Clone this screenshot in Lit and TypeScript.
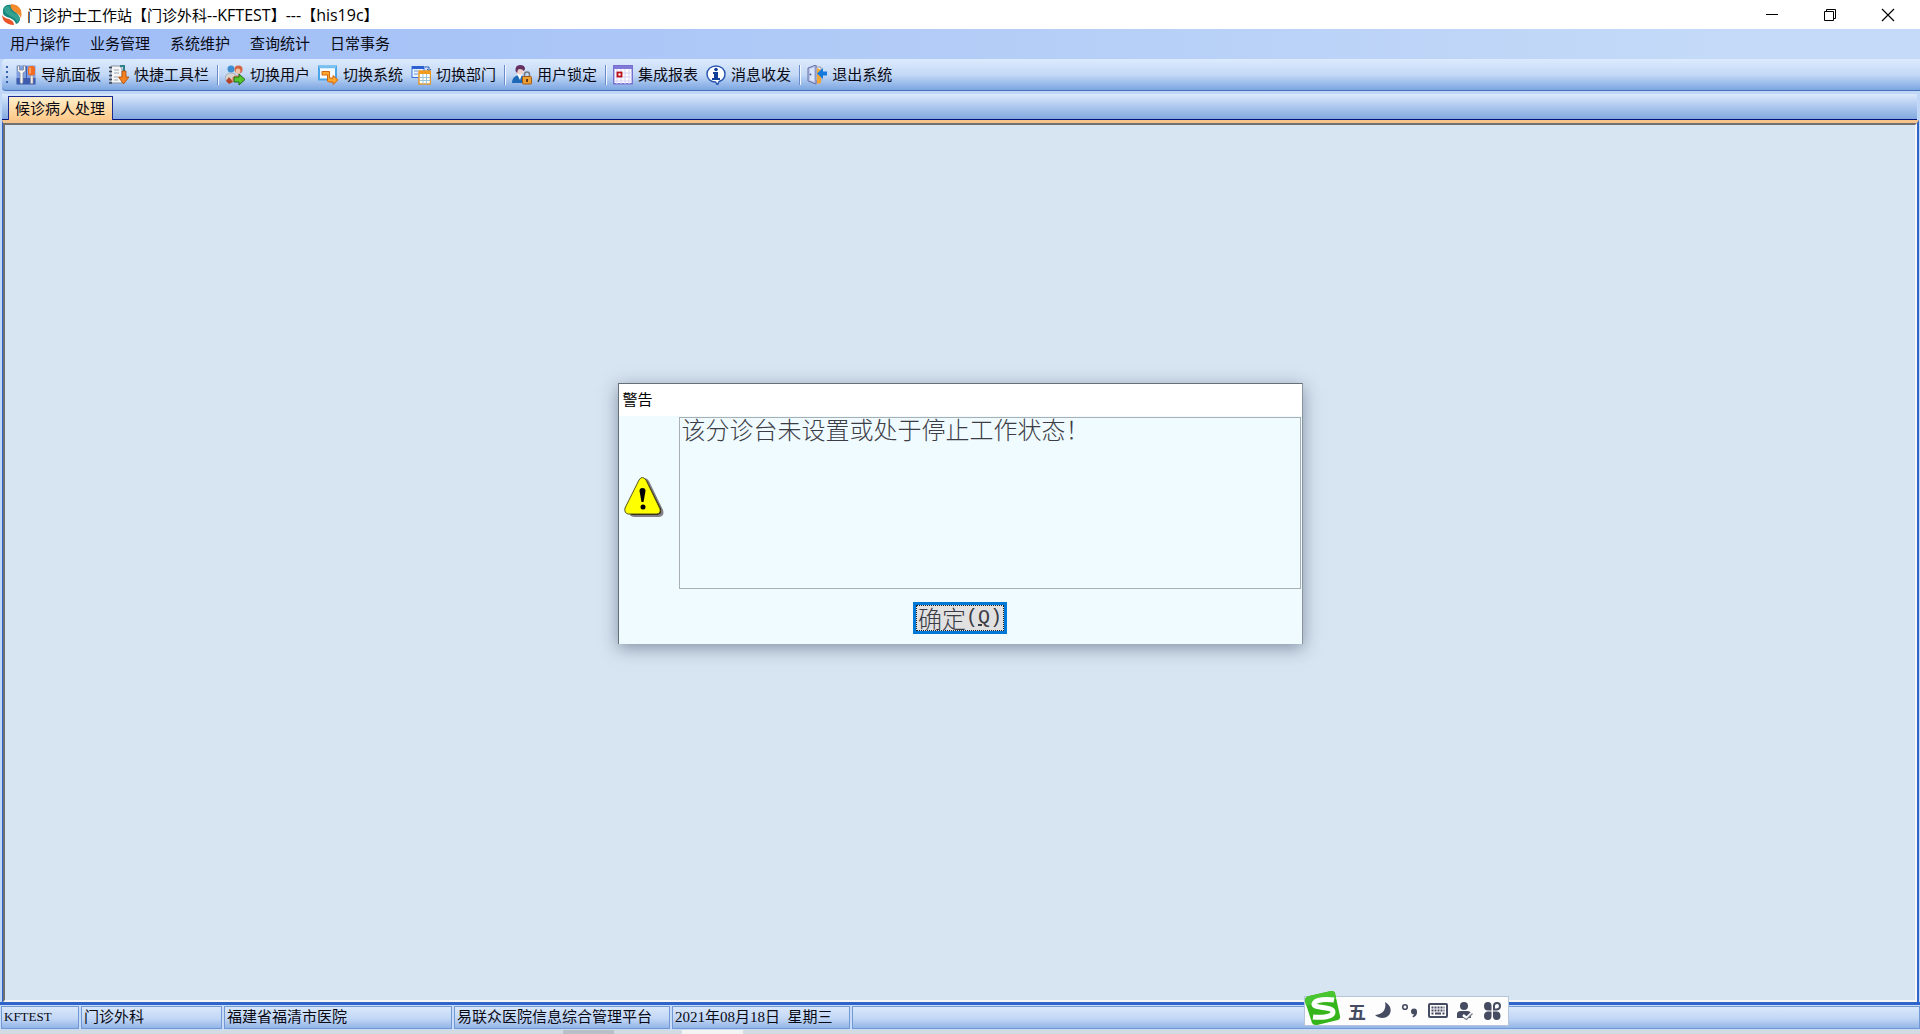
import { LitElement, html, css, svg } from "lit";
import { customElement } from "lit/decorators.js";

const icons: Record<string, unknown> = {
  panel: svg`<rect x="0.5" y="0.5" width="19" height="19" rx="1" fill="#7f9fe4"/><rect x="0.5" y="13" width="19" height="6.500" fill="#3e5cae"/><path d="M10.500 1v18" stroke="#3e5cae"/><path d="M1.500 1v5L4 8v9.500q1.500 2.500 3 0V8l2.500-2V1L7.500 0.500V5h-4V0.500z" fill="#f2f4f6" stroke="#7d8798" stroke-width=".8"/><rect x="12" y="1" width="7" height="9.500" rx="2.500" fill="#f36a21"/><path d="M14 2.500v6" stroke="#ffb27a" stroke-width="1.500"/><path d="M14.500 10.500h2.500v8h-2.500z" fill="#ece9e6" stroke="#9a8f8d" stroke-width=".6"/>`,
  tools: svg`<path d="M2 1h9l2 3v14H2z" fill="#f5f6f8" stroke="#8b93a0"/><path d="M0 2.500h3M0 6.500h3M0 10.500h3M0 14.500h3M0 18h3" stroke="#3a4252" stroke-width="1.600"/><path d="M5 5h5M5 8h5M5 12h4M5 15h4" stroke="#9fa8b5"/><path d="M11 1h4v6" fill="none" stroke="#2f7f86" stroke-width="2"/><path d="M13 6h4v6h3l-5.500 7L9.500 12H13z" fill="#f58220" stroke="#a94b0c" stroke-width=".8"/>`,
  users: svg`<circle cx="6" cy="4" r="3.500" fill="#3d8fd0"/><path d="M0 15q0-7 6-7t6 7z" fill="#d8d5cf" stroke="#8593a5" stroke-width=".6"/><circle cx="13.500" cy="4.500" r="4" fill="#d5623f"/><circle cx="13" cy="6" r="2.500" fill="#f1c4a4"/><path d="M6 17q0-7 6.500-7t6 7z" fill="#e79b7e"/><path d="M1 16l3-4 4 5-4 2z" fill="#b2432b"/><path d="M9 12h5V9l6 5.500-6 5.500v-3H9z" fill="#55c52e" stroke="#23651b"/>`,
  system: svg`<rect x="1" y="1.500" width="17" height="13" fill="#f8fbff" stroke="#49a5e8" stroke-width="2"/><path d="M1 2h17" stroke="#75c0f0" stroke-width="2.500"/><path d="M4 6.500h7.500V13H15v-2.500l5 4.500-5 4.500V17h-4.500l-1-1V10H4z" fill="#ffa72a" stroke="#cf6510"/>`,
  dept: svg`<rect x="1" y="1.500" width="12" height="11" fill="#e9f2ff" stroke="#3a71d6"/><path d="M1 2.500h12" stroke="#2c5fd0" stroke-width="3"/><path d="M3 6h4M3 9h4" stroke="#6795dd"/><path d="M14 2h4v3M16 4l2 2 2-2" fill="none" stroke="#315fae"/><rect x="8" y="6" width="11.500" height="13" fill="#fff" stroke="#e1982b" stroke-width="1.500"/><path d="M8 7.500h12" stroke="#f29b1c" stroke-width="3"/><path d="M9 12.500h10M9 15.500h10M12 9v10M15.500 9v10" stroke="#9ac4d5"/>`,
  lock: svg`<path d="M0 18q0-7 7-8 8 1 8 8z" fill="#1d68b7"/><path d="M5 9l3 6 2-6z" fill="#fff"/><circle cx="8" cy="5.500" r="4" fill="#ecd0cb"/><path d="M3.500 6Q3 0 8 0t5 4l-1 2q-3-3-6-1.500L5 8z" fill="#652f61"/><path d="M12.500 12V9.500q0-2.500 2.500-2.500t2.500 2.500V12" fill="none" stroke="#727983" stroke-width="1.500"/><rect x="10.500" y="11.500" width="9" height="7.500" rx="1" fill="#eda032" stroke="#a35b19"/><rect x="14" y="14" width="2" height="3" fill="#6c3c18"/>`,
  report: svg`<rect x="0.750" y="0.750" width="18.500" height="18" fill="#fff" stroke="#7870cf" stroke-width="1.500"/><path d="M1 2.500h18" stroke="#8179d8" stroke-width="3"/><path d="M1 8h18M1 12h18M1 16h18M4 4v15M8 4v15M12 4v15M16 4v15" stroke="#d4d0f7"/><rect x="4.500" y="7.500" width="4" height="4" fill="#fff" stroke="#b90e16" stroke-width="1.800"/>`,
  info: svg`<path d="M10 1c5.200 0 9 3.500 9 8 0 4-2.500 6.500-6 7.500L11.500 20 9.500 17C4.500 17 1 13.500 1 9s3.800-8 9-8z" fill="#fff" stroke="#2a58b0" stroke-width="1.500"/><circle cx="10" cy="4.500" r="1.800" fill="#123f98"/><path d="M7 7h5v6h2v2H6v-2h2V9H7z" fill="#123f98"/>`,
  exit: svg`<path d="M7 2h7v14H7z" fill="#e9ecef" stroke="#929ab0"/><path d="M1 3l8-3v19l-8-3z" fill="#b8c5ea" stroke="#676da1"/><path d="M3 4l4-1.500v14L3 15z" fill="#dce6fa"/><circle cx="3.500" cy="9.500" r="1" fill="#4e5b93"/><path d="M10 3l4 2v13l-4 1z" fill="#f0a73a"/><path d="M20 6.500h-4V3l-6 5.500 6 5.500v-3.500h4z" fill="#1479dc"/>`,
};

const menus = ["用户操作", "业务管理", "系统维护", "查询统计", "日常事务"];
const toolGroups: [string, string][][] = [
  [["panel", "导航面板"], ["tools", "快捷工具栏"]],
  [["users", "切换用户"], ["system", "切换系统"], ["dept", "切换部门"]],
  [["lock", "用户锁定"]],
  [["report", "集成报表"], ["info", "消息收发"]],
  [["exit", "退出系统"]],
];

@customElement("warning-dialog")
class WarningDialog extends LitElement {
  static styles = css`
    :host { display: block; width: 685px; }
    .dialog { border: 1px solid #666e76; border-right-color: #8a949c; border-bottom: 0; background: #effbff;
      box-shadow: 0 4px 16px rgba(50, 65, 90, .5); font-family: "Liberation Sans", "Noto Sans CJK SC", sans-serif; }
    .head { margin: 0; background: #fff; height: 32px; line-height: 32px; padding: 0 4px; font-size: 15px; font-weight: 400; color: #000; }
    .body { display: flex; padding: 1px 1px 0 5px; gap: 14px; }
    .mark { width: 41px; align-self: center; display: block; flex: none; margin-top: -12px; }
    .message { flex: 1; margin: 0; height: 170px; border: 1px solid #a9afb3; color: #3c3c46; font-size: 24px; font-weight: 300; line-height: 26px; padding: 0 2px; }
    .foot { display: flex; justify-content: center; padding: 13px 0 10px; }
    .ok { height: 32px; box-sizing: border-box; padding: 0; border: 3px solid #0078d7; border-radius: 0;
      background: #e1e1e1; color: #3c3c46; font: 300 24px/24px "Noto Sans CJK SC", sans-serif; }
    .focus { border: 1px dotted #222; box-sizing: border-box; padding: 0 1px; height: 26px; display: flex; align-items: center; white-space: pre; }
    .key { font: 20px/24px "Liberation Mono", monospace; }
  `;
  render() {
    return html`<section class="dialog" role="alertdialog" aria-labelledby="t" aria-describedby="m">
      <h2 class="head" id="t">警告</h2>
      <div class="body">
        <svg class="mark" viewBox="0 0 41 41" aria-hidden="true">
          <path d="M18 3q4-4 7 1l14 29q2 6-4 7H10q-6-1-4-5z" fill="#858087"/>
          <path d="M16 3q4-4 7 1l14 28q1 5-4 6H7z" fill="#111"/>
          <path d="M15 3q3-5 7 0l14 29q1 4-3 5H4q-4-1-3-6z" fill="#ff0" stroke="#55551c"/>
          <path d="M15.500 14q0-3 3-3t3 3l-2 11h-2z" fill="#000"/><circle cx="19" cy="30" r="2.500"/>
        </svg>
        <p class="message" id="m">该分诊台未设置或处于停止工作状态！</p>
      </div>
      <div class="foot"><button class="ok"><span class="focus">确定<span class="key">(<u>Q</u>)</span></span></button></div>
    </section>`;
  }
}

@customElement("input-bar")
class InputBar extends LitElement {
  static styles = css`
    :host { display: block; }
    .bar { display: flex; align-items: center; height: 28px; background: #fdfdfe; border: 1px solid #b5c4d8; padding: 0 6px 0 42px; gap: 7px; color: #454b60; position: relative; }
    .logo { position: absolute; left: 0; top: -6px; width: 36px; height: 36px; }
    .btn { border: 0; background: none; padding: 0; width: 20px; height: 20px; color: inherit; flex: none; }
    .btn svg { display: block; width: 20px; height: 20px; }
    .word { font: 700 18px/18px "Noto Sans CJK SC", sans-serif; }
  `;
  render() {
    return html`<div class="bar">
      <svg class="logo" viewBox="0 0 36 36" aria-hidden="true"><path d="M4 5l22-5q3-.500 4 2l5 23q.500 3-2 4l-21 5q-4 .500-5-2L0 10q-.500-4 4-5z" fill="#35b51b"/><path d="M4 5l22-5q3-.500 4 2l1 6L1 15 0 10q-.500-4 4-5z" fill="#49c531"/><path d="M29 9c-6-1-19-1-20 4-.500 5 19 2 19 8 0 5-11 6-20 5" fill="none" stroke="#fff" stroke-width="5"/></svg>
      <button class="btn word">五</button>
      <button class="btn" aria-label="全半角"><svg viewBox="0 0 20 20"><path d="M11 1c6 3 7 9 4 13s-10 4-14 0c6 0 12-4 10-13z" fill="#454b60"/></svg></button>
      <button class="btn" aria-label="标点"><svg viewBox="0 0 20 20"><circle cx="4" cy="6" r="2.300" fill="none" stroke="#454b60" stroke-width="1.600"/><circle cx="13" cy="10.500" r="3" fill="#454b60"/><path d="M16 10q.500 5-4 6.500l-.500-1.500q2-1 2-3.500z" fill="#454b60"/></svg></button>
      <button class="btn" aria-label="键盘"><svg viewBox="0 0 20 20"><rect x="1" y="3" width="18" height="13" rx="1" fill="none" stroke="#454b60" stroke-width="2"/><path d="M3.500 6.500h13M3.500 9.500h13" stroke="#454b60" stroke-width="1.800" stroke-dasharray="2 1"/><path d="M3.500 12.500h2M7 12.500h6M14.500 12.500h2" stroke="#454b60" stroke-width="1.800"/></svg></button>
      <button class="btn" aria-label="皮肤"><svg viewBox="0 0 20 20"><circle cx="9" cy="5" r="4" fill="#454b60"/><path d="M2 17v-4q0-3 4-3h6q4 0 4 3v4z" fill="#454b60"/><path d="M8 14l3.500 3L18 11" fill="none" stroke="#fff" stroke-width="2.500"/><path d="M9 17l2.500 1.500 6-6" fill="none" stroke="#777d8d" stroke-width="1.300"/></svg></button>
      <button class="btn" aria-label="工具箱"><svg viewBox="0 0 20 20" fill="#454b60"><path d="M2 5q0-4 4-4 3.500 0 3.500 4v4.500H6Q2 9.500 2 5zM2 15q0 4 4 4 3.500 0 3.500-4v-4.500H6q-4 0-4 4.500zM18.500 15q0 4-4 4-3.500 0-3.500-4v-4.500h3.500q4 0 4 4.500z"/><path d="M12 8.500V5q0-3 3-3t3 3-3 3.500z" fill="none" stroke="#454b60" stroke-width="2"/></svg></button>
    </div>`;
  }
}

@customElement("app-root")
class AppRoot extends LitElement {
  static styles = css`
    :host { display: block; }
    .window { display: flex; flex-direction: column; min-height: 100vh; position: relative; background: #c0d7f8; color: #0a0a14;
      font: 15px/20px "Liberation Sans", "Noto Sans CJK SC", sans-serif; }
    button { font: inherit; color: inherit; border: 0; background: none; padding: 0; white-space: nowrap; }
    .title { display: flex; height: 29px; background: #fff; align-items: center; color: #000; padding-right: 3px; }
    .logo { width: 20px; height: 21px; margin: 0 5px 0 2px; }
    .caption { flex: 1; margin: 0; font: 15px/28px "Open Sans", "Noto Sans CJK SC", sans-serif; }
    .latin { font-size: 16px; }
    .ctl { width: 58px; height: 29px; display: grid; place-items: center; }
    .ctl svg { width: 14px; height: 14px; display: block; }
    .menu { display: flex; gap: 20px; height: 30px; padding: 0 10px; align-items: center; background: linear-gradient(90deg, #9ebcf6, #c4daf8 90%); }
    .tools { display: flex; height: 31px; align-items: center; margin-left: 2px; border-bottom: 1px solid #4773b5; border-radius: 4px 0 0 4px;
      background: linear-gradient(#dceafd, #c4d9f6 50%, #7ca6e2); }
    .grip { width: 2px; height: 18px; margin: 0 4px 0 4px; background: repeating-linear-gradient(#3a62ac 0 2px, transparent 2px 5px); }
    .tool { display: flex; align-items: center; gap: 5px; padding: 0 4px; height: 28px; }
    .tool svg { width: 20px; height: 20px; display: block; }
    .sep { width: 1px; height: 20px; background: #6a8ccb; border-right: 1px solid #f2f7ff; margin: 0 2px 0 4px; }
    .tabs { display: flex; align-items: flex-end; margin: 3px 3px 0 2px; height: 25px; padding-left: 6px; border-bottom: 1px solid #00127c;
      background: linear-gradient(#dceafc, #b2cbf0 45%, #83a9e0); }
    .tab { height: 24px; padding: 0 7px 0 6px; margin-bottom: -1px; border: 1px solid #1b2a93; border-bottom: 0; background: linear-gradient(#ffefca, #ffc988); line-height: 24px; position: relative; }
    .page { flex: 1; display: flex; flex-direction: column; margin: 0 1px 0 2px; border-top: 3px solid #f5c38c; border-left: 1px solid #2f64c8; border-right: 2px solid #2f64c8; }
    .canvas { flex: 1; display: grid; place-items: center; padding-bottom: 98px; background: #d7e4f1; border: 2px solid #707070; border-right-color: #f5f5f5; border-bottom-color: #f5f5f5; }
    .status { display: flex; gap: 2px; height: 24px; border-top: 3px solid #2f64c8; padding: 1px 0 0 1px; background: #c8dcf8; }
    .cell { height: 23px; box-sizing: border-box; border: 1px solid #7099d6; padding: 0 2px; line-height: 20px; font-family: "Liberation Serif", "Noto Sans CJK SC", sans-serif;
      background: linear-gradient(#d8e7fb, #c2d7f5 55%, #93b5e7); white-space: pre; }
    .c1 { width: 78px; font-size: 13px; } .c2 { width: 141px; } .c3 { width: 228px; } .c4 { width: 216px; } .c5 { width: 178px; } .c6 { flex: 1; }
    .edge { height: 4px; background: linear-gradient(90deg, transparent 563px, #b8bfc7 563px 614px, transparent 614px 682px, #f3f3f3 682px 743px, transparent 743px), #d3dbe2; }
    .ime { position: absolute; right: 411px; bottom: 8px; }
  `;
  render() {
    return html`<div class="window">
      <header class="title">
        <svg class="logo" viewBox="0 0 20 21" aria-hidden="true"><path d="M1 9Q0 3 5 1q4-1 6 1-3 2 1 5 6 4 6 9-1 3-4 4-1-4-6-6-7-2-7-5z" fill="#14867c"/><path d="M2 4q5-4 6 0 1 4 6 6 4 2 4 5l-3 4q0-4-5-6Q2 10 2 4z" fill="#35a191"/><path d="M9 0q7 0 10 6 1 4 0 8-2-4-6-6-6-4-4-8z" fill="#f58a2c"/><path d="M0 11q2 3 7 4 5 2 5 6-6 0-10-4-2-3-2-6z" fill="#e9562a"/></svg>
        <h1 class="caption">门诊护士工作站【门诊外科<span class="latin">--KFTEST</span>】<span class="latin">---</span>【<span class="latin">his19c</span>】</h1>
        <button class="ctl" aria-label="最小化"><svg viewBox="0 0 14 14"><path d="M1 6.500h12" stroke="#000"/></svg></button>
        <button class="ctl" aria-label="还原"><svg viewBox="0 0 14 14" fill="none" stroke="#000"><path d="M1.500 3.500h9v9h-9zM3.500 3.500v-2h9v9h-2"/></svg></button>
        <button class="ctl" aria-label="关闭"><svg viewBox="0 0 14 14"><path d="M1 1l12 12M13 1L1 13" stroke="#000" stroke-width="1.200"/></svg></button>
      </header>
      <nav class="menu">${menus.map((m) => html`<button>${m}</button>`)}</nav>
      <div class="tools" role="toolbar"><span class="grip"></span>
        ${toolGroups.map((g, i) => html`${i ? html`<span class="sep"></span>` : ""}${g.map(([k, t]) => html`<button class="tool"><svg viewBox="0 0 20 20" aria-hidden="true">${icons[k]}</svg>${t}</button>`)}`)}
      </div>
      <div class="tabs" role="tablist"><button class="tab" role="tab" aria-selected="true">候诊病人处理</button></div>
      <main class="page"><div class="canvas"><warning-dialog></warning-dialog></div></main>
      <footer class="status">
        <span class="cell c1">KFTEST</span><span class="cell c2">门诊外科</span><span class="cell c3">福建省福清市医院</span>
        <span class="cell c4">易联众医院信息综合管理平台</span><span class="cell c5">2021年08月18日  星期三</span><span class="cell c6"></span>
      </footer>
      <div class="edge"></div>
      <input-bar class="ime"></input-bar>
    </div>`;
  }
}
